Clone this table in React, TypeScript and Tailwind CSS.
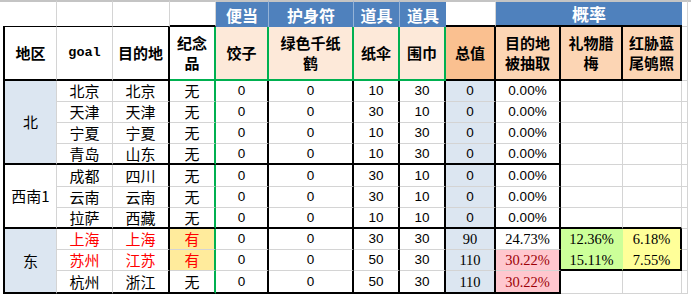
import React from "react";

const CJK = "font-['Noto_Sans_CJK_SC',sans-serif]";
const SANS = "font-['Liberation_Sans',sans-serif] text-[13.5px] leading-[16px]";
const SERIF = "font-['Liberation_Serif',serif] text-[14.5px] leading-[16px]";

const gR = "border-r border-r-[#d4d4d4]";
const gB = "border-b border-b-[#d4d4d4]";
const kR = "border-r-2 border-r-black";
const kB = "border-b-2 border-b-black";
const nR = "border-r-2 border-r-[#00b050]";
const nB = "border-b-2 border-b-[#00b050]";
const T = "border-t-2 border-t-[#c4c4c4]";
const BLUE = "bg-[#4f81bd] text-white font-bold text-[16px] leading-[20px] " + CJK;
const H2 = "font-bold text-[15px] leading-[20px] text-black text-center " + CJK;

function C({ c = "", children }: { c?: string; children?: React.ReactNode }) {
  return (
    <div className={"flex items-center justify-center overflow-hidden whitespace-nowrap " + c}>
      {children}
    </div>
  );
}

type Row = {
  city: string;
  dest: string;
  gift: string;
  e: string;
  f: string;
  g: string;
  h: string;
  total: string;
  pct: string;
  k?: string;
  l?: string;
};

const rows: Row[] = [
  { city: "北京", dest: "北京", gift: "无", e: "0", f: "0", g: "10", h: "30", total: "0", pct: "0.00%" },
  { city: "天津", dest: "天津", gift: "无", e: "0", f: "0", g: "30", h: "10", total: "0", pct: "0.00%" },
  { city: "宁夏", dest: "宁夏", gift: "无", e: "0", f: "0", g: "10", h: "30", total: "0", pct: "0.00%" },
  { city: "青岛", dest: "山东", gift: "无", e: "0", f: "0", g: "10", h: "30", total: "0", pct: "0.00%" },
  { city: "成都", dest: "四川", gift: "无", e: "0", f: "0", g: "30", h: "10", total: "0", pct: "0.00%" },
  { city: "云南", dest: "云南", gift: "无", e: "0", f: "0", g: "30", h: "10", total: "0", pct: "0.00%" },
  { city: "拉萨", dest: "西藏", gift: "无", e: "0", f: "0", g: "10", h: "10", total: "0", pct: "0.00%" },
  { city: "上海", dest: "上海", gift: "有", e: "0", f: "0", g: "30", h: "30", total: "90", pct: "24.73%", k: "12.36%", l: "6.18%" },
  { city: "苏州", dest: "江苏", gift: "有", e: "0", f: "0", g: "50", h: "30", total: "110", pct: "30.22%", k: "15.11%", l: "7.55%" },
  { city: "杭州", dest: "浙江", gift: "无", e: "0", f: "0", g: "50", h: "30", total: "110", pct: "30.22%" },
];

export default function App() {
  const cells: React.ReactNode[] = [];
  rows.forEach((r, i) => {
    const end = i === 3 || i === 6 || i === 9;
    const bb = end ? kB : gB;
    const red = i === 7 || i === 8;
    const chText = "text-[15px] leading-[16px] " + CJK + (red ? " text-[#ff0000]" : " text-black");
    cells.push(<C key={"m" + i} c="bg-white" />);
    if (i === 0)
      cells.push(
        <C key="a0" c={"row-span-4 bg-[#dce6f1] border-l-2 border-l-black " + gR + " " + kB + " text-[15px] leading-[16px] " + CJK}>
          北
        </C>
      );
    if (i === 4)
      cells.push(
        <C key="a4" c={"row-span-3 bg-white border-l-2 border-l-black " + gR + " " + kB + " text-[15px] leading-[16px] " + CJK}>
          西南1
        </C>
      );
    if (i === 7)
      cells.push(
        <C key="a7" c={"row-span-3 bg-[#dce6f1] border-l-2 border-l-black " + gR + " " + kB + " text-[15px] leading-[16px] " + CJK}>
          东
        </C>
      );
    cells.push(<C key={"b" + i} c={gR + " " + bb + " " + chText}>{r.city}</C>);
    cells.push(<C key={"c" + i} c={kR + " " + bb + " " + chText}>{r.dest}</C>);
    cells.push(
      <C key={"d" + i} c={nR + " " + bb + " " + chText + (red ? " bg-[#ffeb9c]" : " bg-white")}>
        {r.gift}
      </C>
    );
    cells.push(<C key={"e" + i} c={kR + " " + bb + " " + SANS}>{r.e}</C>);
    cells.push(<C key={"f" + i} c={kR + " " + bb + " " + SANS}>{r.f}</C>);
    cells.push(<C key={"g" + i} c={kR + " " + bb + " " + SANS}>{r.g}</C>);
    cells.push(<C key={"h" + i} c={kR + " " + bb + " " + SANS}>{r.h}</C>);
    cells.push(
      <C key={"i" + i} c={"bg-[#dce6f1] " + kR + " " + bb + " " + (i >= 7 ? SERIF : SANS)}>
        {r.total}
      </C>
    );
    cells.push(
      <C
        key={"j" + i}
        c={
          kR +
          " " +
          bb +
          " " +
          (i >= 7 ? SERIF : SANS) +
          (i >= 8 ? " bg-[#ffc7ce] text-[#9c0006]" : " bg-white text-black")
        }
      >
        {r.pct}
      </C>
    );
    const kRight = red ? "border-r border-r-[#ccff99]" : gR;
    const kBottom = i === 6 || i === 8 ? kB : i === 7 ? "border-b border-b-[#ccff99]" : gB;
    cells.push(
      <C key={"k" + i} c={kRight + " " + kBottom + " " + SERIF + (red ? " bg-[#ccff99]" : " bg-white")}>
        {r.k}
      </C>
    );
    const lRight = red ? kR : gR;
    const lBottom = i === 6 || i === 8 ? kB : i === 7 ? "border-b border-b-[#ffff99]" : gB;
    cells.push(
      <C key={"l" + i} c={lRight + " " + lBottom + " " + SERIF + (red ? " bg-[#ffff99]" : " bg-white")}>
        {r.l}
      </C>
    );
    cells.push(<C key={"n" + i} c={gR + " " + gB} />);
    cells.push(<C key={"o" + i} c="" />);
  });

  return (
    <div className="w-[691px] h-[294px] bg-white overflow-hidden text-black">
      <div className="grid grid-cols-[3px_54px_56px_57px_46px_53px_85px_46px_46px_50px_65px_62px_59px_6px_3px] grid-rows-[27px_54px_21px_21px_21px_21px_22px_21px_21px_21px_21px_23px]">
        {/* Row 1 */}
        <C c={T} />
        <C c={T + " " + gR + " border-b border-b-black"} />
        <C c={T + " " + gR + " border-b border-b-black"} />
        <C c={T + " " + gR + " border-b border-b-black"} />
        <C c={T + " " + gR + " border-b-2 border-b-black"} />
        <C c={T + " border-r border-r-[#95b3d7] " + BLUE}>便当</C>
        <C c={T + " border-r border-r-[#95b3d7] " + BLUE}>护身符</C>
        <C c={T + " border-r border-r-[#95b3d7] " + BLUE}>道具</C>
        <C c={T + " " + BLUE}>道具</C>
        <C c={T + " " + gR + " " + kB} />
        <C c={"col-span-3 " + T + " " + kB + " " + BLUE + " text-[17px]"}>概率</C>
        <C c={T + " " + gR + " " + gB} />
        <C c={T} />

        {/* Row 2 */}
        <C c="" />
        <C c={"border-l-2 border-l-black " + gR + " " + kB + " " + H2}>地区</C>
        <C c={gR + " " + kB + " font-bold text-[13.5px] font-['Liberation_Mono',monospace]"}>goal</C>
        <C c={kR + " " + kB + " " + H2}>目的地</C>
        <C c={nR + " " + nB + " " + H2}>
          <span>
            纪念
            <br />品
          </span>
        </C>
        <C c={"bg-[#fde9d9] " + nR + " " + nB + " " + H2}>饺子</C>
        <C c={"bg-[#fde9d9] " + nR + " " + nB + " " + H2 + " text-[15.5px]"}>
          <span>
            绿色千纸
            <br />鹤
          </span>
        </C>
        <C c={"bg-[#fde9d9] " + nR + " " + nB + " " + H2}>纸伞</C>
        <C c={"bg-[#fde9d9] " + nR + " " + nB + " " + H2}>围巾</C>
        <C c={"bg-[#fac090] " + kR + " " + kB + " " + H2}>总值</C>
        <C c={"bg-[#fcd5b4] " + kR + " " + kB + " " + H2}>
          <span>
            目的地
            <br />被抽取
          </span>
        </C>
        <C c={"bg-[#fcd5b4] " + kR + " " + kB + " " + H2}>
          <span>
            礼物腊
            <br />梅
          </span>
        </C>
        <C c={"bg-[#fcd5b4] " + kR + " " + kB + " " + H2}>
          <span>
            红胁蓝
            <br />尾鸲照
          </span>
        </C>
        <C c={gR + " " + gB} />
        <C c="" />

        {cells}
      </div>
    </div>
  );
}
